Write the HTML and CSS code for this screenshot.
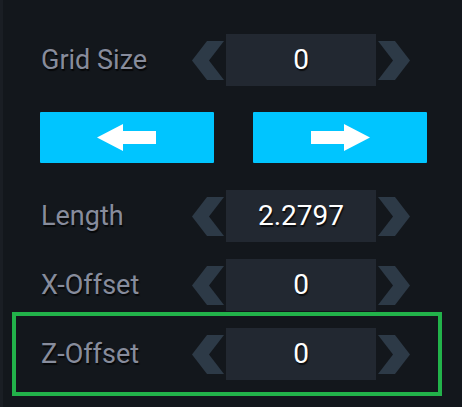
FILE: index.html
```html
<!DOCTYPE html>
<html lang="en">
<head>
    <meta charset="UTF-8">
    <meta name="viewport" content="width=device-width, initial-scale=1.0">
    <title>Grid Settings</title>
    <link rel="stylesheet" href="styles.css">
</head>
<body>
    <div class="panel">
        <div class="row">
            <div class="label">Grid Size</div>
            <div class="stepper">
                <svg class="chev" width="34" height="39" viewBox="0 0 34 39"><polygon points="15,0 34,0 34,39 15,39 0,19.5"/><polygon class="cut" points="32,0 34,0 34,39 32,39 17,19.5"/></svg>
                <div class="value">0</div>
                <svg class="chev flip" width="34" height="39" viewBox="0 0 34 39"><polygon points="15,0 34,0 34,39 15,39 0,19.5"/><polygon class="cut" points="32,0 34,0 34,39 32,39 17,19.5"/></svg>
            </div>
        </div>

        <div class="buttons">
            <div class="btn">
                <svg width="60" height="28" viewBox="0 0 60 28"><polygon points="0,13.5 26,0 26,7 59,7 59,20 26,20 26,27"/></svg>
            </div>
            <div class="btn">
                <svg class="flip" width="60" height="28" viewBox="0 0 60 28"><polygon points="0,13.5 26,0 26,7 59,7 59,20 26,20 26,27"/></svg>
            </div>
        </div>

        <div class="row">
            <div class="label">Length</div>
            <div class="stepper">
                <svg class="chev" width="34" height="39" viewBox="0 0 34 39"><polygon points="15,0 34,0 34,39 15,39 0,19.5"/><polygon class="cut" points="32,0 34,0 34,39 32,39 17,19.5"/></svg>
                <div class="value">2.2797</div>
                <svg class="chev flip" width="34" height="39" viewBox="0 0 34 39"><polygon points="15,0 34,0 34,39 15,39 0,19.5"/><polygon class="cut" points="32,0 34,0 34,39 32,39 17,19.5"/></svg>
            </div>
        </div>

        <div class="row">
            <div class="label">X-Offset</div>
            <div class="stepper">
                <svg class="chev" width="34" height="39" viewBox="0 0 34 39"><polygon points="15,0 34,0 34,39 15,39 0,19.5"/><polygon class="cut" points="32,0 34,0 34,39 32,39 17,19.5"/></svg>
                <div class="value">0</div>
                <svg class="chev flip" width="34" height="39" viewBox="0 0 34 39"><polygon points="15,0 34,0 34,39 15,39 0,19.5"/><polygon class="cut" points="32,0 34,0 34,39 32,39 17,19.5"/></svg>
            </div>
        </div>

        <div class="row selected">
            <div class="label">Z-Offset</div>
            <div class="stepper">
                <svg class="chev" width="34" height="39" viewBox="0 0 34 39"><polygon points="15,0 34,0 34,39 15,39 0,19.5"/><polygon class="cut" points="32,0 34,0 34,39 32,39 17,19.5"/></svg>
                <div class="value">0</div>
                <svg class="chev flip" width="34" height="39" viewBox="0 0 34 39"><polygon points="15,0 34,0 34,39 15,39 0,19.5"/><polygon class="cut" points="32,0 34,0 34,39 32,39 17,19.5"/></svg>
            </div>
        </div>
    </div>
</body>
</html>
```

FILE: styles.css
```css
* {box-sizing: border-box; margin: 0; padding: 0;}
body {
    background: #13171c;
    font-family: Roboto, "Noto Sans", sans-serif;
    height: 407px;
    overflow: hidden;
}

.panel {
    border-left: 3px solid #1a1e24;
    height: 100%;
    padding: 34px 0 0 25px;
}

.row {
    display: flex;
    align-items: center;
    width: 398px;
    height: 52px;
    margin-bottom: 17px;
}
.row.selected {
    outline: 4px solid #22b24a;
    outline-offset: 12px;
}

.label {
    width: 164px;
    padding-left: 13px;
    color: #878c9c;
    font-size: 27px;
    text-shadow: 1px 2px 1px rgba(0, 0, 0, 0.7);
}

.stepper {
    display: flex;
    align-items: center;
}
.chev {display: block; fill: #2d3a47;}
.chev .cut {fill: #13171c;}
.flip {transform: scaleX(-1);}

.value {
    width: 150px;
    height: 52px;
    background: #222831;
    color: #fff;
    font-size: 28px;
    text-align: center;
    line-height: 52px;
    text-shadow: 1px 2px 1px rgba(0, 0, 0, 0.7);
}

.buttons {
    display: flex;
    gap: 39px;
    margin: 26px 0 27px 12px;
}
.btn {
    width: 174px;
    height: 51px;
    background: #00c5ff;
    display: flex;
    align-items: center;
    justify-content: center;
    border-radius: 1px;
}
.btn svg {display: block; fill: #fff;}
```
